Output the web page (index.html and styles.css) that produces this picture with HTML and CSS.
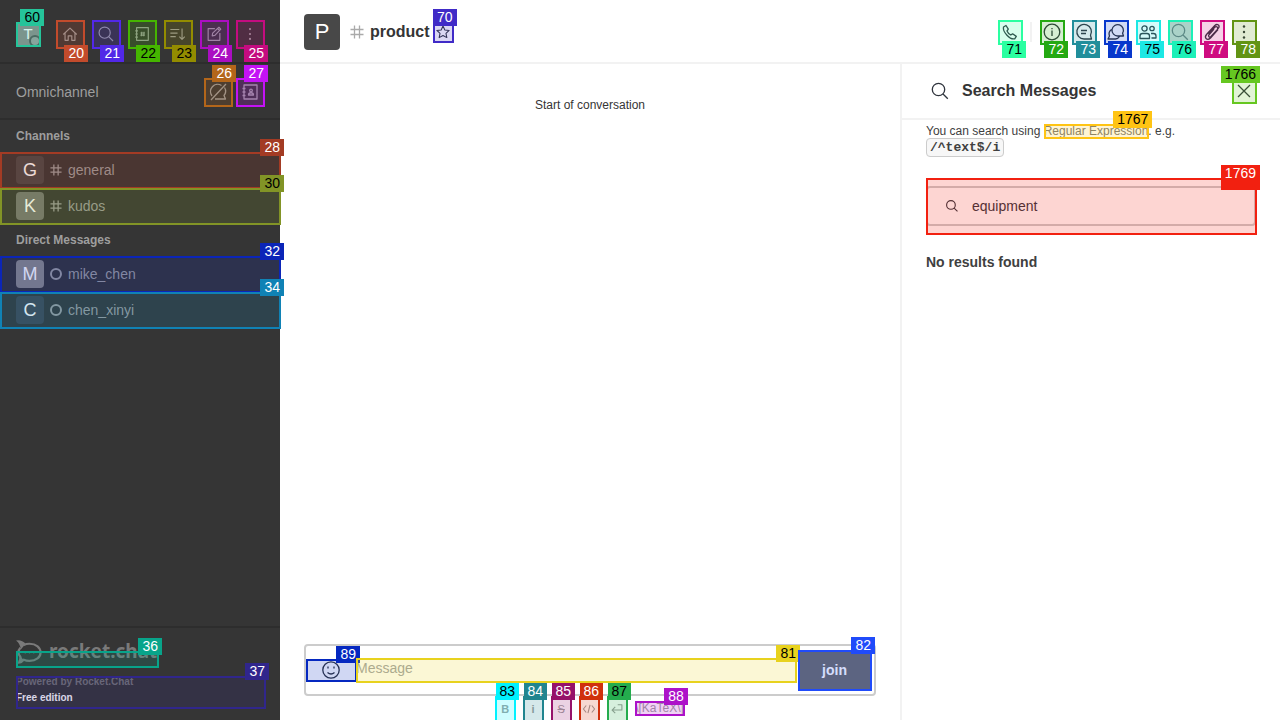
FILE: index.html
```html
<!DOCTYPE html>
<html lang="en">
<head>
<meta charset="utf-8">
<title>product</title>
<link rel="stylesheet" href="styles.css">
</head>
<body>
<svg class="sprite" aria-hidden="true">
  <symbol id="home" viewBox="0 0 20 20"><path d="M2.500 10.500 10 3.500l7.500 7M4.500 9v8h3.500v-5h4v5h3.500V9"/></symbol>
  <symbol id="search" viewBox="0 0 20 20"><circle cx="8.500" cy="8.500" r="6.200"/><path d="m13 13 4.800 4.800"/></symbol>
  <symbol id="directory" viewBox="0 0 20 20"><path d="M4 3h13v14H4zM2.500 6.500h3M2.500 10h3M2.500 13.500h3M9.700 7.500l-.4 5M12.300 7.500l-.4 5M8.200 8.900h5M8.200 11.300h5"/></symbol>
  <symbol id="contacts" viewBox="0 0 20 20"><path d="M4 3h13v14H4zM2.500 6.500h3M2.500 10h3M2.500 13.500h3M8.500 13c0-3 5-3 5 0z"/><circle cx="11" cy="8.500" r="1.300"/></symbol>
  <symbol id="sort" viewBox="0 0 20 20"><path d="M1.500 5h10M1.500 9h8M1.500 13h6M14.500 4v12M11.500 13l3 3 3-3"/></symbol>
  <symbol id="edit" viewBox="0 0 20 20"><path d="M11 4H3.500v13h13V9M8 12l.5-3 7-6.500 2 2-6.500 7zM14 4l2 2"/></symbol>
  <symbol id="kebab" viewBox="0 0 20 20"><g class="solid"><circle cx="10" cy="4.500" r="1.200"/><circle cx="10" cy="10" r="1.200"/><circle cx="10" cy="15.500" r="1.200"/></g></symbol>
  <symbol id="chat-off" viewBox="0 0 20 20"><path d="M13.500 3.500A7.200 7.200 0 0 0 4 14M7 17h10.500l-1.500-3.500a7 7 0 0 0 .5-8M3 18 18 2"/></symbol>
  <symbol id="hash" viewBox="0 0 14 14"><path d="M4.500 .5v13M9.500 .5v13M.5 4.500h13M.5 9.500h13"/></symbol>
  <symbol id="star" viewBox="0 0 20 20"><path d="m10 2.500 2.300 4.900 5.400.6-4 3.700 1.100 5.300L10 14.400 5.200 17l1.100-5.300-4-3.700 5.400-.6z"/></symbol>
  <symbol id="phone" viewBox="0 0 20 20"><path d="M3.500 5 6 3.500l2.300 3.700L7 9q1.200 2.800 3.800 4l1.800-1.200 3.700 2.600-1.600 2.400C10 18 2.500 10 3.500 5z"/></symbol>
  <symbol id="info" viewBox="0 0 20 20"><circle cx="10" cy="10" r="7.800"/><path d="M10 8.500V14M10 6v1.200"/></symbol>
  <symbol id="thread" viewBox="0 0 20 20"><path d="M17.500 17H10A7.300 7.300 0 1 1 16.500 13.300zM7 8.500h6M7 11.500h5"/></symbol>
  <symbol id="discussion" viewBox="0 0 20 20"><path d="M17.500 14H12a5.700 5.700 0 1 1 4.600-2.800zM5.500 7.500a5.500 5.500 0 0 0-2 6.500L2 17h7.500a5 5 0 0 0 4-2.500"/></symbol>
  <symbol id="team" viewBox="0 0 20 20"><circle cx="6.500" cy="6.500" r="2.600"/><circle cx="14" cy="6.500" r="2.200"/><path d="M2 16.500v-2.500q0-2.500 2.500-2.500h4.500q2.500 0 2.500 2.500v2.500zM13 11.500h2.500q2.500 0 2.500 2.500v2h-4.500"/></symbol>
  <symbol id="clip" viewBox="0 0 20 20"><path d="m6.500 12 6-6.500c2-2 4.300.2 2.700 2.200L9 14.500c-1.500 1.500-3.300-.3-2-1.800l5-5.700M15.200 7.700l1.600-2c1.200-3.200-2-4-4-2.200l-8.300 9c-2.800 3.500.8 6.500 4 3.500l7.500-8.500"/></symbol>
  <symbol id="cross" viewBox="0 0 20 20"><path d="m4 4 12 12M16 4 4 16"/></symbol>
  <symbol id="smile" viewBox="0 0 20 20"><circle cx="10" cy="10" r="8.200"/><path d="M6.500 12.500q3.500 3 7 0M7 6.500v2M13 6.500v2"/></symbol>
  <symbol id="code" viewBox="0 0 20 20"><path d="m6 5-4 5 4 5M14 5l4 5-4 5M11.500 4l-3 12"/></symbol>
  <symbol id="enter" viewBox="0 0 20 20"><path d="M7.500 7 3 11.500 7.500 16M3 11.500H17V4h-6"/></symbol>
  <symbol id="rocket" viewBox="0 0 28 26"><path class="outline" d="M8 5.300C10 4.200 12 3.900 14 3.900c7 0 11.500 4 11.500 9S21 21.700 14 21.700c-2 0-4-.3-6-1.200-1.500 1-3 1.500-4.500 1.700 1-1.500 1.500-3 1-4.700-2.500-3-2.500-6.500 0-9.500"/><g class="solid"><circle cx="9.500" cy="12.800" r="1.200"/><circle cx="14" cy="12.800" r="1.200"/><circle cx="18.500" cy="12.800" r="1.200"/><path d="M0 .5q6-1 10 3.500L5 10Q4.500 4 0 .5zM.500 24.500q4-2 3-8l5 4.500Q6 25.500.500 24.500z"/></g></symbol>
</svg>

<div class="app">
  <aside class="sidebar">
    <header class="side-head">
      <button class="me" aria-label="User menu"><span class="me-tile">T</span><span class="presence"></span><span class="mark m60"><b>60</b></span></button>
      <button class="tool" aria-label="Home"><svg><use href="#home"/></svg><span class="mark below m20"><b>20</b></span></button>
      <button class="tool" aria-label="Search"><svg><use href="#search"/></svg><span class="mark below m21"><b>21</b></span></button>
      <button class="tool" aria-label="Directory"><svg><use href="#directory"/></svg><span class="mark below m22"><b>22</b></span></button>
      <button class="tool" aria-label="Display"><svg><use href="#sort"/></svg><span class="mark below m23"><b>23</b></span></button>
      <button class="tool" aria-label="Create new"><svg><use href="#edit"/></svg><span class="mark below m24"><b>24</b></span></button>
      <button class="tool" aria-label="More"><svg><use href="#kebab"/></svg><span class="mark below m25"><b>25</b></span></button>
    </header>
    <section class="omni">
      <span>Omnichannel</span>
      <div class="omni-tools">
        <button class="tool" aria-label="Not available"><svg><use href="#chat-off"/></svg><span class="mark m26"><b>26</b></span></button>
        <button class="tool" aria-label="Contacts"><svg><use href="#contacts"/></svg><span class="mark m27"><b>27</b></span></button>
      </div>
    </section>
    <nav class="rooms">
      <h2>Channels</h2>
      <a class="room" href="#general"><span class="tile brown">G</span><svg><use href="#hash"/></svg>general<span class="mark m28"><b>28</b></span></a>
      <a class="room" href="#kudos"><span class="tile olive">K</span><svg><use href="#hash"/></svg>kudos<span class="mark m30"><b>30</b></span></a>
      <h2>Direct Messages</h2>
      <a class="room" href="#mike"><span class="tile violet">M</span><span class="ring"></span>mike_chen<span class="mark m32"><b>32</b></span></a>
      <a class="room" href="#chen"><span class="tile slate">C</span><span class="ring"></span>chen_xinyi<span class="mark m34"><b>34</b></span></a>
    </nav>
    <footer class="side-foot">
      <a class="brand" href="#site"><svg><use href="#rocket"/></svg><span class="wordmark">rocket.chat</span><span class="mark m36"><b>36</b></span></a>
      <div class="edition"><span class="powered">Powered by Rocket.Chat</span><span>Free edition</span><span class="mark m37"><b>37</b></span></div>
    </footer>
  </aside>

  <div class="content">
    <header class="room-head">
      <span class="room-tile">P</span>
      <svg class="room-hash"><use href="#hash"/></svg>
      <h1>product</h1>
      <button class="star" aria-label="Favorite"><svg><use href="#star"/></svg><span class="mark m70"><b>70</b></span></button>
      <div class="actions">
        <button class="act" aria-label="Call"><svg><use href="#phone"/></svg><span class="mark below m71"><b>71</b></span></button>
        <span class="divider"></span>
        <button class="act" aria-label="Room information"><svg><use href="#info"/></svg><span class="mark below m72"><b>72</b></span></button>
        <button class="act" aria-label="Threads"><svg><use href="#thread"/></svg><span class="mark below m73"><b>73</b></span></button>
        <button class="act" aria-label="Discussion"><svg><use href="#discussion"/></svg><span class="mark below m74"><b>74</b></span></button>
        <button class="act" aria-label="Members"><svg><use href="#team"/></svg><span class="mark below m75"><b>75</b></span></button>
        <button class="act pressed" aria-label="Search Messages"><svg><use href="#search"/></svg><span class="mark below m76"><b>76</b></span></button>
        <button class="act" aria-label="Files"><svg><use href="#clip"/></svg><span class="mark below m77"><b>77</b></span></button>
        <button class="act" aria-label="Options"><svg><use href="#kebab"/></svg><span class="mark below m78"><b>78</b></span></button>
      </div>
    </header>
    <div class="columns">
      <main class="conversation">
        <p class="start">Start of conversation</p>
        <div class="composer">
          <div class="compose-box">
            <button class="emoji" aria-label="Emoji"><svg><use href="#smile"/></svg><span class="mark m89"><b>89</b></span></button>
            <div class="message"><textarea aria-label="Message" placeholder="Message" rows="1"></textarea><span class="mark m81"><b>81</b></span></div>
            <button class="join">join<span class="mark m82"><b>82</b></span></button>
          </div>
          <div class="formats">
            <button class="format" aria-label="Bold"><strong>B</strong><span class="mark m83"><b>83</b></span></button>
            <button class="format" aria-label="Italic"><strong>i</strong><span class="mark m84"><b>84</b></span></button>
            <button class="format" aria-label="Strike"><s>S</s><span class="mark m85"><b>85</b></span></button>
            <button class="format" aria-label="Code"><svg><use href="#code"/></svg><span class="mark m86"><b>86</b></span></button>
            <button class="format" aria-label="Multiline"><svg><use href="#enter"/></svg><span class="mark m87"><b>87</b></span></button>
            <a class="katex" href="#katex">\[KaTeX\]<span class="mark m88"><b>88</b></span></a>
          </div>
        </div>
      </main>
      <aside class="panel">
        <header class="panel-head">
          <svg><use href="#search"/></svg>
          <h2>Search Messages</h2>
          <button class="act" aria-label="Close"><svg><use href="#cross"/></svg><span class="mark m1766"><b>1766</b></span></button>
        </header>
        <div class="panel-body">
          <p class="hint">You can search using <a href="#regex">Regular Expression<span class="mark m1767"><b>1767</b></span></a>. e.g.<br><code>/^text$/i</code></p>
          <div class="search-wrap">
            <label class="search-field"><svg><use href="#search"/></svg><input type="text" value="equipment" aria-label="Search Messages"></label>
            <span class="mark m1769"><i></i><b>1769</b></span>
          </div>
          <p class="empty">No results found</p>
        </div>
      </aside>
    </div>
  </div>
</div>
</body>
</html>
```
FILE: styles.css
```css
* { box-sizing: border-box; }
body { margin: 0; font: 14px/20px "Liberation Sans", Arial, sans-serif; color: #2f343d; background: #fff; overflow: hidden; }
h1, h2, p { margin: 0; }
button { position: relative; display: flex; align-items: center; justify-content: center; flex: none; border: 0; padding: 0; margin: 0; background: none; color: inherit; font: inherit; }
a { color: inherit; text-decoration: none; }
svg { display: block; flex: none; width: 20px; height: 20px; fill: none; stroke: currentColor; stroke-width: 1.3; stroke-linejoin: round; }
.solid { fill: currentColor; stroke: none; }
.sprite { position: absolute; width: 0; height: 0; }

.app { display: flex; height: 100vh; }
.sidebar { display: flex; flex-direction: column; flex: none; width: 280px; background: #353535; color: #9e9e9e; }
.side-head { display: flex; gap: 8px; height: 64px; padding: 20px 16px 0; border-bottom: 2px solid #2d2d2d; }
.me { width: 24px; height: 24px; margin: 2px 8px 0 0; }
.me-tile { width: 24px; height: 24px; border-radius: 2px; background: #8f8a8b; color: #fff; font-size: 15px; line-height: 24px; }
.presence { position: absolute; right: -1px; bottom: -1px; width: 12px; height: 12px; border: 2px solid #555; border-radius: 50%; background: #9e9e9e; }
.tool { width: 28px; height: 28px; }
.tool svg { width: 18px; height: 18px; }
.omni { display: flex; align-items: center; justify-content: space-between; height: 56px; padding: 2px 16px 0; border-bottom: 2px solid #2d2d2d; }
.omni-tools { display: flex; gap: 4px; }
.omni-tools svg { width: 20px; height: 20px; }
.rooms { flex: 1; }
.rooms h2 { padding: 0 16px; font-size: 12px; line-height: 32px; }
.room { position: relative; display: flex; align-items: center; height: 36px; padding: 0 16px; }
.tile { width: 28px; height: 28px; margin-right: 6px; border-radius: 4px; color: #fff; font-size: 18px; line-height: 28px; text-align: center; }
.room svg { width: 12px; height: 12px; margin-right: 6px; stroke-width: 1.5; }
.ring { width: 12px; height: 12px; margin-right: 6px; border: 2px solid #9e9e9e; border-radius: 50%; }
.brown { background: #484848; }
.olive { background: #757575; }
.violet { background: #8c8a85; }
.slate { background: #414750; }
.side-foot { height: 94px; padding: 12px 16px 0; border-top: 2px solid #2d2d2d; }
.brand { position: relative; display: flex; align-items: center; gap: 6px; width: 142px; height: 24px; margin-bottom: 12px; color: #7a7a7a; font: 700 19px/20px "Noto Sans", sans-serif; }
.wordmark { margin-top: -2px; }
.brand svg { width: 27px; height: 25px; }
.outline { stroke-width: 2.3; }
.edition { position: relative; display: flex; flex-direction: column; height: 32px; font-weight: 700; font-size: 10px; line-height: 16px; color: #fff; }
.powered { color: #757575; line-height: 12px; margin-bottom: 2px; }

.content { display: flex; flex-direction: column; flex: 1; min-width: 0; }
.room-head { display: flex; align-items: center; height: 64px; padding: 2px 24px 0; border-bottom: 2px solid #f2f2f2; }
.room-tile { width: 36px; height: 36px; margin-right: 10px; border-radius: 4px; background: #484848; color: #fff; font-size: 22px; line-height: 36px; text-align: center; }
.room-hash { width: 14px; height: 14px; margin-right: 6px; color: #aaa; }
.room-head h1 { margin-right: 3px; font-size: 16px; line-height: 24px; color: #353535; }
.star { width: 20px; height: 20px; }
.star svg { width: 16px; height: 16px; }
.actions { display: flex; align-items: center; gap: 8px; margin-left: auto; }
.act { width: 24px; height: 24px; }
.pressed { background: #ccc; color: #6c727a; }
.divider { width: 2px; height: 20px; background: #f2f2f2; }
.columns { display: flex; flex: 1; min-height: 0; }
.conversation { display: flex; flex-direction: column; flex: 1; min-width: 0; }
.start { padding-top: 31px; font-size: 12px; text-align: center; color: #353535; }
.composer { margin-top: auto; height: 76px; padding: 0 24px; }
.compose-box { display: flex; align-items: center; height: 52px; border: 2px solid #ccc; border-radius: 4px; }
.emoji { width: 50px; height: 22px; }
.message { position: relative; flex: 1; height: 24px; }
.message textarea { display: block; width: 100%; height: 24px; padding: 0; border: 0; resize: none; background: none; font: inherit; color: inherit; outline: 0; }
.message textarea::placeholder { color: #9ea2a8; }
.join { width: 73px; height: 40px; margin: 0 3px 0 2px; border-radius: 4px; background: #6b6b66; color: #fff; font-weight: 700; }
.formats { display: flex; justify-content: center; gap: 8px; height: 24px; padding-right: 1px; color: #9e9e9e; }
.format { width: 20px; height: 25px; font-size: 11px; }
.format svg { width: 14px; height: 14px; stroke-width: 1.6; }
.katex { position: relative; height: 14px; margin-top: 5px; font-size: 12px; line-height: 14px; }

.panel { flex: none; width: 380px; border-left: 2px solid #f2f2f2; }
.panel-head { display: flex; align-items: center; height: 56px; padding: 0 24px 0 28px; border-bottom: 2px solid #f2f2f2; }
.panel-head h2 { flex: 1; margin-left: 12px; font-size: 16px; line-height: 24px; color: #353535; }
.panel-body { padding: 3px 24px 0; }
.hint { font-size: 12px; line-height: 16px; color: #404040; }
.hint a { position: relative; display: inline-block; line-height: 14px; color: #757575; }
.hint code { padding: 1px 3px; border: 1px solid #ccc; border-radius: 4px; background: #f7f7f7; font: 700 13px/16px "Liberation Mono", monospace; }
.search-wrap { position: relative; margin-top: 22px; padding: 8px 0; }
.search-field { display: flex; align-items: center; height: 40px; padding: 0 17px; border: 2px solid #ccc; border-radius: 4px; }
.search-field svg { width: 14px; height: 14px; margin-right: 13px; stroke-width: 1.6; }
.search-field input { flex: 1; min-width: 0; padding: 0; border: 0; background: none; font: inherit; color: #2f343d; outline: 0; }
.empty { margin-top: 18px; font-weight: 700; color: #404040; }

/* Numbered markers drawn over each interactive element */
.mark { position: absolute; z-index: 1; top: 0; left: 0; right: -1px; bottom: -1px; border: 2px solid var(--c); pointer-events: none; }
.mark::before { content: ""; position: absolute; inset: 0; background: var(--c); opacity: .19; }
.mark b, .mark i { position: absolute; z-index: 2; top: -15px; right: -5px; height: 17px; padding: 0 4px; background: var(--c); color: var(--t, #fff); font: 400 14px/17px "Liberation Sans", Arial, sans-serif; }
.mark i { top: -7px; width: 39px; }
.below b { top: auto; bottom: -15px; }
.m20 { --c: #c24b2c; }
.m21 { --c: #5228e8; }
.m22 { --c: #45b500; --t: #000; }
.m23 { --c: #938c00; --t: #000; }
.m24 { --c: #ab0ec2; }
.m25 { --c: #c40c80; }
.m26 { --c: #b3661a; }
.m27 { --c: #c412f5; }
.m28 { --c: #a33b24; }
.m30 { --c: #829426; --t: #000; }
.m32 { --c: #0b25b8; }
.m34 { --c: #1082b5; }
.brand .m36 { --c: #08a48a; top: 11px; bottom: -4px; }
.m37 { --c: #30268c; }
.edition .m37 { right: -2px; }
.m60 { --c: #25c49a; --t: #000; }
.m70 { --c: #402bc7; }
.m71 { --c: #2affa1; --t: #000; }
.m72 { --c: #24a912; }
.m73 { --c: #218e9b; }
.m74 { --c: #0838cc; }
.m75 { --c: #1ce8e4; --t: #000; }
.m76 { --c: #1cf0b8; --t: #000; }
.m77 { --c: #cf0c80; }
.m78 { --c: #629414; }
.m81 { --c: #e8d21e; --t: #000; }
.m82 { --c: #204bfa; }
.m83 { --c: #00f2ff; --t: #000; }
.m84 { --c: #21858f; }
.m85 { --c: #96126a; }
.m86 { --c: #d0300c; }
.m87 { --c: #24ac4d; --t: #000; }
.m88 { --c: #ad12c9; }
.m89 { --c: #0528c0; }
.m1766 { --c: #66c721; --t: #000; }
.m1767 { --c: #ffc414; --t: #000; }
.m1769 { --c: #f22010; }
```
